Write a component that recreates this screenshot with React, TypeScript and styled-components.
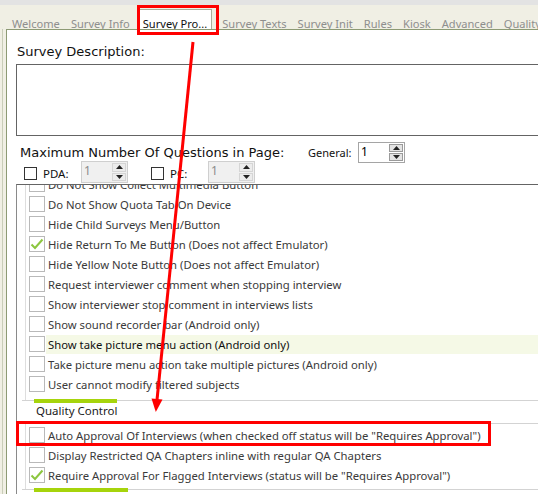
import React from 'react';
import styled, { createGlobalStyle } from 'styled-components';

const GlobalStyle = createGlobalStyle`
  html, body {
    margin: 0;
    padding: 0;
    background: #f0efe4;
  }
  * {
    box-sizing: border-box;
  }
`;

const Root = styled.div`
  position: relative;
  width: 538px;
  height: 494px;
  overflow: hidden;
  background: #f0efe4;
  font-family: 'Noto Sans', 'Liberation Sans', sans-serif;
  font-size: 12px;
`;

const TopStrip = styled.div`
  height: 5px;
  background: #e3e3e3;
`;

const TabBar = styled.div`
  display: flex;
  align-items: flex-end;
  height: 24px;
  padding-left: 5px;
  background: #f0efe4;
  white-space: nowrap;
`;

const Tab = styled.div<{ $active?: boolean }>`
  display: flex;
  align-items: flex-end;
  height: ${({ $active }) => ($active ? '20px' : '14px')};
  padding: ${({ $active }) => ($active ? '0 4px' : '0 4px 0 7px')};
  margin: ${({ $active }) => ($active ? '0 3px 0 4px' : '0')};
  font-size: 11.1px;
  line-height: 10px;
  color: ${({ $active }) => ($active ? '#111' : '#8e8e8e')};
  background: ${({ $active }) => ($active ? '#fff' : 'transparent')};
  border: ${({ $active }) => ($active ? '1px solid #a9ae9c' : 'none')};
  border-bottom: none;
`;

const TabSep = styled.span`
  width: 1px;
  height: 14px;
  margin-bottom: 4px;
  background: #5f8b3a;
`;

const Frame = styled.div`
  display: flex;
  height: 465px;
`;

const Gutter = styled.div`
  width: 4px;
  margin-left: 2px;
  border-left: 1px solid #c9cdb8;
`;

const Panel = styled.div`
  flex: 1;
  display: flex;
  flex-direction: column;
  background: #fff;
  border-left: 1px solid #8d9a74;
  border-top: 1px solid #8d9a74;
  padding: 14px 0 0 9px;
  overflow: hidden;
`;

const FieldLabel = styled.div`
  font-family: 'DejaVu Sans', Verdana, sans-serif;
  font-size: 13px;
  line-height: 15px;
  color: #111;
  padding-left: 1px;
  white-space: nowrap;
`;

const DescBox = styled.div`
  height: 72px;
  margin-top: 5px;
  border: 1px solid #646464;
  border-right: none;
  background: #fff;
`;

const MaxRow = styled.div`
  display: flex;
  align-items: center;
  height: 21px;
  margin-top: 6px;
`;

const MaxLabel = styled(FieldLabel)`
  padding-left: 4px;
  width: 292px;
`;

const SmallLabel = styled.span`
  font-size: 11px;
  color: #111;
  width: 50px;
`;

const SpinBox = styled.div<{ $disabled?: boolean }>`
  display: flex;
  align-items: stretch;
  flex: none;
  width: 47px;
  height: ${({ $disabled }) => ($disabled ? '22px' : '21px')};
  border: 1px solid ${({ $disabled }) => ($disabled ? '#cfcfcf' : '#a5a5a5')};
  background: ${({ $disabled }) => ($disabled ? '#f0f0f0' : '#fff')};
  font-size: 12px;
  color: ${({ $disabled }) => ($disabled ? '#8c8c8c' : '#000')};
`;

const SpinValue = styled.div`
  flex: 1;
  padding-left: 2px;
  line-height: 18px;
`;

const SpinButtons = styled.div`
  display: flex;
  flex-direction: column;
  width: 14px;
  margin: 1px 1px 1px 0;
  gap: 1px;
`;

const SpinButton = styled.div<{ $disabled?: boolean }>`
  flex: 1;
  display: flex;
  align-items: center;
  justify-content: center;
  background: ${({ $disabled }) => ($disabled ? '#ececec' : '#e3e3e3')};
  border: 1px solid ${({ $disabled }) => ($disabled ? '#d5d5d5' : '#9a9a9a')};
  svg {
    display: block;
  }
`;

const DeviceRow = styled.div`
  display: flex;
  align-items: center;
  height: 22px;
  margin-top: -2px;
  padding-left: 8px;
`;

const SmallCheck = styled.span`
  flex: none;
  width: 13px;
  height: 13px;
  border: 1px solid #333;
  background: #fff;
  margin-top: 2px;
`;

const DeviceLabel = styled.span`
  flex: none;
  width: 44px;
  padding-left: 6px;
  font-size: 11.5px;
  color: #111;
  margin-top: 2px;
`;

const Gap = styled.span`
  flex: none;
  width: 23px;
`;

const ListBox = styled.div`
  flex: 1;
  margin-top: 1px;
  border-top: 1px solid #646464;
  border-left: 1px solid #8a8a8a;
  padding-left: 8px;
  overflow: hidden;
`;

const Items = styled.div<{ $offset?: number; $tail: number }>`
  margin-top: ${({ $offset }) => ($offset ? `${$offset}px` : '0')};
  padding: 1px 0 ${({ $tail }) => $tail}px 3px;
  border-left: 1px solid #dedede;
`;

const Row = styled.div`
  display: flex;
  align-items: center;
  height: 20px;
  white-space: nowrap;
`;

const Box = styled.span`
  flex: none;
  display: flex;
  align-items: center;
  justify-content: center;
  width: 16px;
  height: 16px;
  border: 1px solid #b9b9b9;
  background: #fff;
`;

const RowText = styled.span<{ $hot?: boolean }>`
  display: flex;
  align-items: center;
  height: 19px;
  margin-left: 1px;
  padding-left: 2px;
  flex: 1;
  font-size: 11.3px;
  color: ${({ $hot }) => ($hot ? '#111' : '#3a3a3a')};
  background: ${({ $hot }) => ($hot ? '#f5f9e6' : 'transparent')};
`;

const GroupHeader = styled.div`
  display: flex;
  align-items: flex-start;
  height: 24px;
  margin-left: -3px;
  border-top: 1px solid #d3d3d3;
  border-bottom: 1px solid #d3d3d3;
  padding-left: 12px;
`;

const GroupTitle = styled.div<{ $w?: number }>`
  position: relative;
  width: ${({ $w }) => ($w ? `${$w}px` : 'auto')};
  padding-left: 2px;
  font-size: 11.5px;
  line-height: 20px;
  color: #1a1a1a;
  &::before {
    content: '';
    position: absolute;
    left: 0;
    right: 0;
    top: -2px;
    height: 4px;
    background: #a6d40c;
  }
`;

const Overlay = styled.svg`
  position: absolute;
  left: 0;
  top: 0;
  pointer-events: none;
`;

const Arrow = ({ up }: { up?: boolean }) => (
  <svg width="7" height="4" viewBox="0 0 7 4">
    <path d={up ? 'M0 4 L3.5 0 L7 4 Z' : 'M0 0 L7 0 L3.5 4 Z'} fill="#222" />
  </svg>
);

const Spinner = ({ value, disabled }: { value: string; disabled?: boolean }) => (
  <SpinBox $disabled={disabled}>
    <SpinValue>{value}</SpinValue>
    <SpinButtons>
      <SpinButton $disabled={disabled}>
        <Arrow up />
      </SpinButton>
      <SpinButton $disabled={disabled}>
        <Arrow />
      </SpinButton>
    </SpinButtons>
  </SpinBox>
);

const Check = () => (
  <svg width="14" height="12" viewBox="0 0 14 12">
    <path d="M1.5 6.5 L5 10 L12.5 1.5" fill="none" stroke="#8cc63f" strokeWidth="2" />
  </svg>
);

type Item = { label: string; checked?: boolean; hot?: boolean };

const generalItems: Item[] = [
  { label: 'Do Not Show Collect Multimedia Button' },
  { label: 'Do Not Show Quota Tab On Device' },
  { label: 'Hide Child Surveys Menu/Button' },
  { label: 'Hide Return To Me Button (Does not affect Emulator)', checked: true },
  { label: 'Hide Yellow Note Button (Does not affect Emulator)' },
  { label: 'Request interviewer comment when stopping interview' },
  { label: 'Show interviewer stop comment in interviews lists' },
  { label: 'Show sound recorder bar (Android only)' },
  { label: 'Show take picture menu action (Android only)', hot: true },
  { label: 'Take picture menu action take multiple pictures (Android only)' },
  { label: 'User cannot modify filtered subjects' },
];

const qualityItems: Item[] = [
  { label: 'Auto Approval Of Interviews (when checked off status will be "Requires Approval")' },
  { label: 'Display Restricted QA Chapters inline with regular QA Chapters' },
  { label: 'Require Approval For Flagged Interviews (status will be "Requires Approval")', checked: true },
];

const tabs = ['Welcome', 'Survey Info', 'Survey Pro...', 'Survey Texts', 'Survey Init', 'Rules', 'Kiosk', 'Advanced', 'Quality'];
const activeTab = 'Survey Pro...';

const CheckRow = ({ item }: { item: Item }) => (
  <Row>
    <Box>{item.checked && <Check />}</Box>
    <RowText $hot={item.hot}>{item.label}</RowText>
  </Row>
);

export default function App() {
  return (
    <>
      <GlobalStyle />
      <Root>
        <TopStrip />
        <TabBar>
          {tabs.map((t, i) => {
            const next = tabs[i + 1];
            const sep = t !== activeTab && next !== activeTab;
            return (
              <React.Fragment key={t}>
                <Tab $active={t === activeTab}>{t}</Tab>
                {sep && <TabSep />}
              </React.Fragment>
            );
          })}
        </TabBar>
        <Frame>
          <Gutter />
          <Panel>
            <FieldLabel>Survey Description:</FieldLabel>
            <DescBox />
            <MaxRow>
              <MaxLabel>Maximum Number Of Questions in Page:</MaxLabel>
              <SmallLabel>General:</SmallLabel>
              <Spinner value="1" />
            </MaxRow>
            <DeviceRow>
              <SmallCheck />
              <DeviceLabel>PDA:</DeviceLabel>
              <Spinner value="1" disabled />
              <Gap />
              <SmallCheck />
              <DeviceLabel>PC:</DeviceLabel>
              <Spinner value="1" disabled />
            </DeviceRow>
            <ListBox>
              <Items $offset={-12} $tail={6}>
                {generalItems.map((it) => (
                  <CheckRow key={it.label} item={it} />
                ))}
              </Items>
              <GroupHeader>
                <GroupTitle>Quality Control</GroupTitle>
              </GroupHeader>
              <Items $tail={4}>
                {qualityItems.map((it) => (
                  <CheckRow key={it.label} item={it} />
                ))}
              </Items>
              <GroupHeader>
                <GroupTitle $w={94} />
              </GroupHeader>
            </ListBox>
          </Panel>
        </Frame>
        <Overlay width="538" height="494" viewBox="0 0 538 494">
          <rect x="138.5" y="6.5" width="79" height="27" fill="none" stroke="#ff0000" strokeWidth="3" />
          <rect x="17.5" y="422.5" width="472" height="22" fill="none" stroke="#ff0000" strokeWidth="3" />
          <line x1="193" y1="42" x2="157" y2="400" stroke="#ff0000" strokeWidth="3" />
          <polygon points="155.8,412 151.5,398.5 162.5,399.6" fill="#ff0000" />
        </Overlay>
      </Root>
    </>
  );
}
